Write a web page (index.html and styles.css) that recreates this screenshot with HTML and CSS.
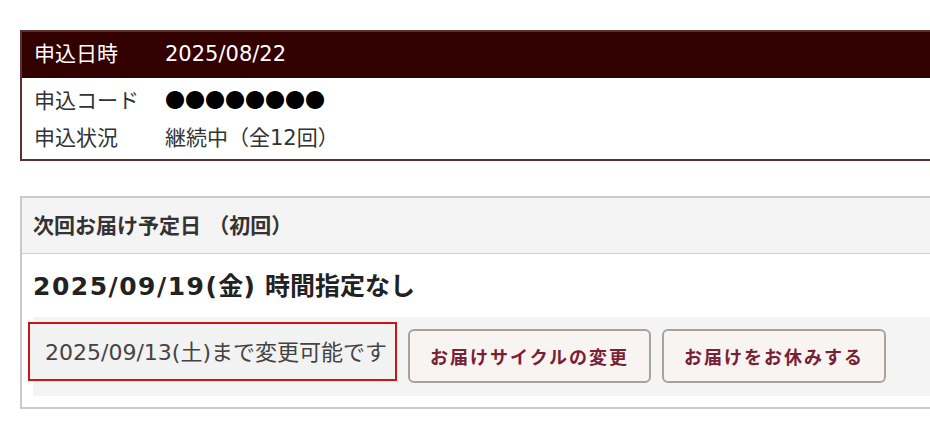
FILE: index.html
```html
<!DOCTYPE html>
<html lang="ja">
<head>
    <meta charset="UTF-8">
    <meta name="viewport" content="width=device-width, initial-scale=1.0">
    <title>定期お届け情報</title>
    <link rel="stylesheet" href="styles.css">
</head>
<body>
    <div class="page">
        <div class="order-info">
            <div class="info-row head">
                <span class="label">申込日時</span><span>2025/08/22</span>
            </div>
            <div class="info-rows">
                <div class="info-row">
                    <span class="label">申込コード</span><span class="code">●●●●●●●●</span>
                </div>
                <div class="info-row">
                    <span class="label">申込状況</span><span>継続中（全12回）</span>
                </div>
            </div>
        </div>

        <div class="delivery">
            <div class="delivery-head">次回お届け予定日 （初回）</div>
            <div class="delivery-body">
                <p class="delivery-date"><span class="num">2025/09/19(</span>金<span class="num">)</span> 時間指定なし</p>
                <div class="action-bar">
                    <div class="deadline">2025/09/13(土)まで変更可能です</div>
                    <button class="btn">お届けサイクルの変更</button>
                    <button class="btn">お届けをお休みする</button>
                </div>
            </div>
        </div>
    </div>
</body>
</html>
```

FILE: styles.css
```css
html, body {
    margin: 0;
    padding: 0;
    background: #fff;
    overflow: hidden;
}
body {
    font-family: "DejaVu Sans", "Noto Sans CJK JP", sans-serif;
    color: #333;
}
.page {
    width: 1000px;
    padding: 30px 0 0 20px;
}
.order-info {
    border: 2px solid #5a3030;
    border-right: none;
}
.info-row {
    padding-left: 12px;
    font-size: 21px;
    height: 38px;
    line-height: 38px;
    white-space: nowrap;
}
.info-row .label {
    display: inline-block;
    width: 131px;
}
.info-row.head {
    height: 46px;
    line-height: 44px;
    background: #330000;
    color: #fff;
}
.info-rows {
    padding: 3px 0 2px;
}
.code {
    font-family: "Noto Sans CJK JP", sans-serif;
    color: #000;
    font-size: 20px;
}
.delivery {
    margin-top: 35px;
    border: 2px solid #cacaca;
    border-right: none;
}
.delivery-head {
    height: 55px;
    display: flex;
    align-items: center;
    padding: 0 0 4px 11px;
    box-sizing: border-box;
    height: 56px;
    background: #f4f4f4;
    border-bottom: 1px solid #cfcfcf;
    font-size: 21px;
    font-weight: bold;
}
.delivery-body {
    padding: 0 0 11px 11px;
}
.delivery-date {
    margin: 0;
    padding: 17px 0 14px;
    line-height: 32px;
    font-size: 25px;
    font-weight: bold;
    color: #222;
}
.delivery-date .num {
    letter-spacing: 1.5px;
}
.action-bar {
    display: flex;
    align-items: flex-start;
    gap: 11px;
    height: 79px;
    padding-top: 5px;
    box-sizing: border-box;
    background: #f4f4f4;
}
.deadline {
    margin-left: -5px;
    width: 369px;
    height: 59px;
    display: flex;
    align-items: center;
    padding: 0 0 3px 15px;
    box-sizing: border-box;
    border: 2px solid #cc1414;
    background: #f2f2f2;
    font-size: 22px;
    color: #444;
}
.btn {
    margin-top: 7px;
    height: 54px;
    padding: 0 20px;
    font-family: "Noto Sans CJK JP", serif;
    font-size: 18px;
    font-weight: bold;
    letter-spacing: 2px;
    color: #7a2034;
    background: #f8f4f2;
    border: 2px solid #aaa19e;
    border-radius: 6px;
}
```
